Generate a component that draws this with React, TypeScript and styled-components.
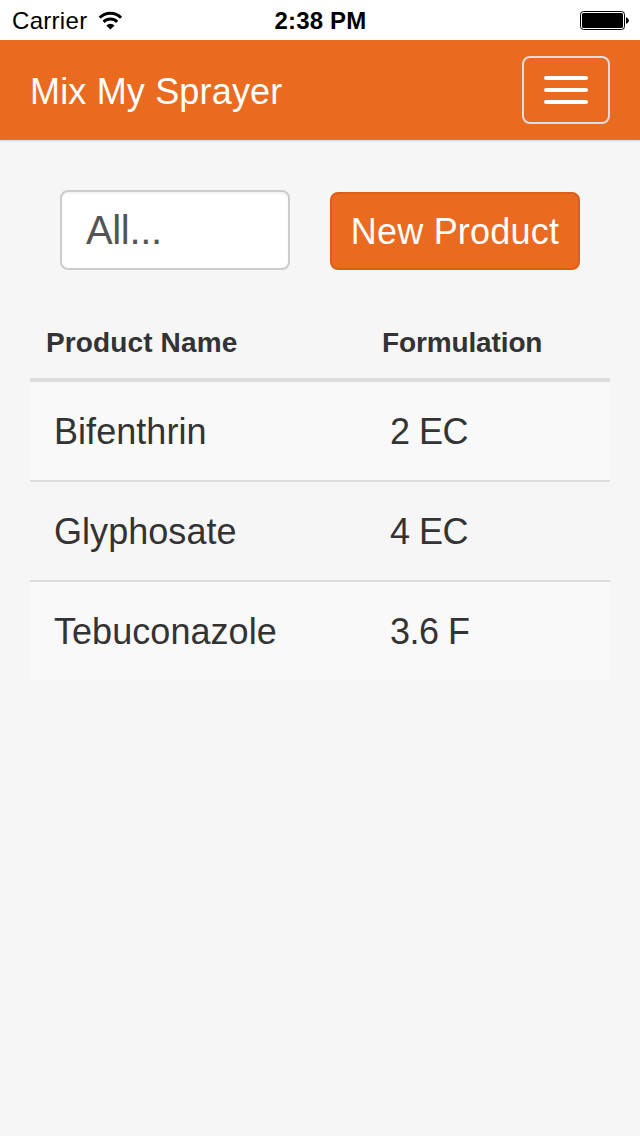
import React from "react";
import styled, { createGlobalStyle } from "styled-components";

const GlobalStyle = createGlobalStyle`
  *, *::before, *::after { box-sizing: border-box; }
  body {
    margin: 0;
    background: #f6f6f6;
    color: #333;
    font-family: "Liberation Sans", Arial, sans-serif;
  }
`;

const Screen = styled.div`
  width: 640px;
  min-height: 1136px;
  background: #f6f6f6;
`;

const StatusBar = styled.div`
  display: grid;
  grid-template-columns: 1fr auto 1fr;
  align-items: center;
  height: 40px;
  padding: 0 11px 0 12px;
  background: #fff;
  color: #000;
  font-size: 24px;
  line-height: 41px;
`;

const Carrier = styled.div`
  display: flex;
  align-items: center;
  gap: 11px;
  letter-spacing: 0.3px;
`;

const Clock = styled.div`
  font-weight: bold;
  letter-spacing: 0.15px;
`;

const BatteryIcon = styled.svg`
  display: block;
  justify-self: end;
`;

const Navbar = styled.header`
  display: flex;
  align-items: center;
  justify-content: space-between;
  height: 100px;
  padding: 0 30px;
  background: #ea6a20;
  box-shadow: 0 1px 2px 0 rgba(0, 0, 0, 0.15);
`;

const Brand = styled.span`
  padding-top: 3px;
  color: #fff;
  font-size: 36px;
  letter-spacing: 0.17px;
  line-height: 40px;
`;

const MenuButton = styled.button`
  display: flex;
  flex-direction: column;
  align-items: center;
  justify-content: center;
  gap: 8px;
  width: 88px;
  height: 68px;
  padding: 0;
  border: 2px solid #ddd;
  border-radius: 8px;
  background: transparent;
`;

const MenuBar = styled.span`
  width: 44px;
  height: 4px;
  border-radius: 2px;
  background: #fff;
`;

const Content = styled.main`
  padding: 50px 30px 0;
`;

const Toolbar = styled.div`
  display: flex;
  align-items: flex-end;
  justify-content: space-between;
  padding: 0 30px;
`;

const FilterField = styled.div`
  width: 230px;
  height: 80px;
  padding: 0 24px;
  border: 2px solid #ccc;
  border-radius: 8px;
  background: #fff;
  box-shadow: inset 0 2px 2px rgba(0, 0, 0, 0.05);
  color: #555;
  font-size: 40px;
  letter-spacing: -0.35px;
  line-height: 76px;
`;

const PrimaryButton = styled.button`
  width: 250px;
  height: 78px;
  padding: 1px 0 0;
  border: 2px solid #dc5f17;
  border-radius: 8px;
  background: #ea6a20;
  color: #fff;
  font-family: inherit;
  font-size: 36px;
  letter-spacing: 0.2px;
  line-height: 73px;
  white-space: nowrap;
`;

const ProductTable = styled.table`
  width: 100%;
  margin-top: 38px;
  border-spacing: 0;
  table-layout: fixed;
`;

const HeadCell = styled.th<{ $width?: number; $tracking?: number }>`
  width: ${(p) => (p.$width ? `${p.$width}px` : "auto")};
  height: 74px;
  padding: 0 16px;
  border-bottom: 4px solid #ddd;
  font-size: 28px;
  letter-spacing: ${(p) => p.$tracking ?? 0}px;
  line-height: 40px;
  text-align: left;
  vertical-align: middle;
`;

const ProductRow = styled.tr`
  &:nth-child(odd) { background: #f9f9f9; }
  &:not(:first-child) > td { height: 100px; border-top: 2px solid #ddd; }
`;

const Cell = styled.td<{ $tracking?: number }>`
  height: 98px;
  padding: 1px 24px 0;
  font-size: 36px;
  letter-spacing: ${(p) => p.$tracking ?? 0}px;
  line-height: 50px;
  vertical-align: middle;
`;

const products = [
  { name: "Bifenthrin", formulation: "2 EC" },
  { name: "Glyphosate", formulation: "4 EC" },
  { name: "Tebuconazole", formulation: "3.6 F" },
];

export default function App() {
  return (
    <>
      <GlobalStyle />
      <Screen>
        <StatusBar>
          <Carrier>
            Carrier
            <svg width="25" height="19" viewBox="0 0 25 19" fill="none" stroke="#000" strokeWidth="3">
              <path d="M1.7 6.7a15.2 15.2 0 0 1 21.4 0" />
              <path d="M5.6 10.9a9.7 9.7 0 0 1 13.6 0" />
              <path d="M12.4 18.6L8.3 14.4a5.8 5.8 0 0 1 8.2 0z" fill="#000" stroke="none" />
            </svg>
          </Carrier>
          <Clock>2:38 PM</Clock>
          <BatteryIcon width="49" height="19" viewBox="0 0 49 19">
            <rect x="0.5" y="0.5" width="44" height="18" rx="3" fill="#fff" stroke="#000" />
            <rect x="2" y="2" width="41" height="15" rx="1.5" />
            <path d="M46 6.2c1.8.5 2.8 1.6 2.8 3.3s-1 2.8-2.8 3.3z" />
          </BatteryIcon>
        </StatusBar>
        <Navbar>
          <Brand>Mix My Sprayer</Brand>
          <MenuButton aria-label="Menu">
            <MenuBar />
            <MenuBar />
            <MenuBar />
          </MenuButton>
        </Navbar>
        <Content>
          <Toolbar>
            <FilterField>All...</FilterField>
            <PrimaryButton>New Product</PrimaryButton>
          </Toolbar>
          <ProductTable>
            <thead>
              <tr>
                <HeadCell $width={336} $tracking={0.13}>Product Name</HeadCell>
                <HeadCell $tracking={-0.13}>Formulation</HeadCell>
              </tr>
            </thead>
            <tbody>
              {products.map((p) => (
                <ProductRow key={p.name}>
                  <Cell $tracking={0.05}>{p.name}</Cell>
                  <Cell $tracking={-0.5}>{p.formulation}</Cell>
                </ProductRow>
              ))}
            </tbody>
          </ProductTable>
        </Content>
      </Screen>
    </>
  );
}
